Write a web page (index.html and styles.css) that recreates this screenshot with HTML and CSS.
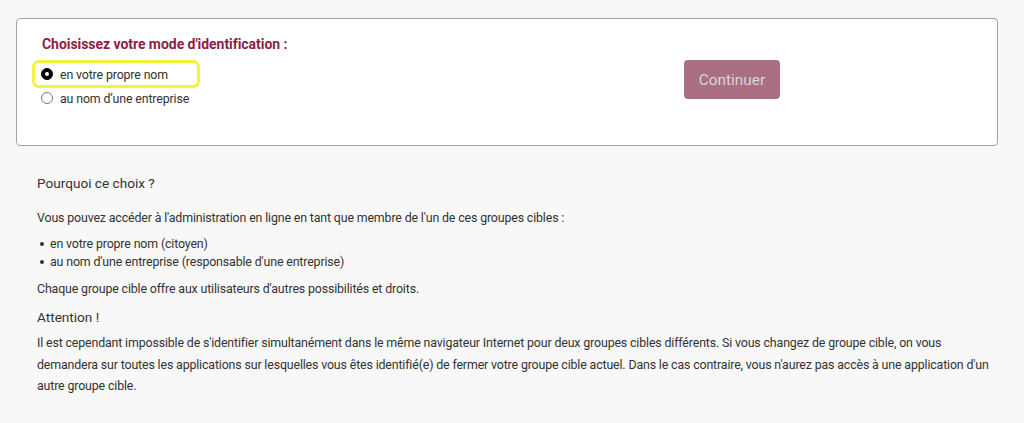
FILE: index.html
```html
<!DOCTYPE html>
<html lang="fr">
<head>
<meta charset="utf-8">
<title>Mode d'identification</title>
<link rel="stylesheet" href="styles.css">
</head>
<body>
<div class="page">
  <form class="card">
    <div class="choice">
      <h2 class="choice-title">Choisissez votre mode d'identification :</h2>
      <label class="option option-focus">
        <input type="radio" name="mode" class="radio" checked>
        <span>en votre propre nom</span>
      </label>
      <label class="option">
        <input type="radio" name="mode" class="radio">
        <span>au nom d’une entreprise</span>
      </label>
    </div>
    <div class="actions">
      <button type="button" class="btn" disabled>Continuer</button>
    </div>
  </form>

  <section class="info">
    <h3 class="info-title">Pourquoi ce choix ?</h3>
    <p class="text intro">Vous pouvez accéder à l'administration en ligne en tant que membre de l'un de ces groupes cibles :</p>
    <ul class="list">
      <li class="list-item">en votre propre nom (citoyen)</li>
      <li class="list-item">au nom d'une entreprise (responsable d'une entreprise)</li>
    </ul>
    <p class="text after-list">Chaque groupe cible offre aux utilisateurs d'autres possibilités et droits.</p>
    <h3 class="info-title attention">Attention !</h3>
    <p class="text warning">Il est cependant impossible de s'identifier simultanément dans le même navigateur Internet pour deux groupes cibles différents. Si vous changez de groupe cible, on vous demandera sur toutes les applications sur lesquelles vous êtes identifié(e) de fermer votre groupe cible actuel. Dans le cas contraire, vous n'aurez pas accès à une application d'un autre groupe cible.</p>
  </section>
</div>
</body>
</html>
```

FILE: styles.css
```css
* { box-sizing: border-box; }

html, body {
  margin: 0;
  padding: 0;
  background: #f8f8f8;
}

body {
  font-family: Roboto, "Liberation Sans", Arial, sans-serif;
  color: #333;
  width: 1024px;
  height: 423px;
  overflow: hidden;
}

.page {
  padding: 18px 26px 0 16px;
}

.card {
  display: flex;
  height: 128px;
  background: #fff;
  border: 1px solid #a3a3a3;
  border-radius: 4px;
  padding: 15px 0 0 25px;
  margin: 0;
}

.choice {
  width: 642px;
  display: flex;
  flex-direction: column;
  align-items: flex-start;
}

.choice-title {
  margin: 0 0 6px;
  font-size: 14px;
  line-height: 20px;
  font-weight: 700;
  color: #8c1f47;
  letter-spacing: -0.05px;
}

.option {
  display: flex;
  align-items: center;
  font-size: 12.4px;
  letter-spacing: -0.15px;
  color: #333;
  margin-left: -10px;
  padding-left: 9px;
  height: 20px;
}

.option-focus {
  height: 28px;
  border: 3px solid #f6f13c;
  border-radius: 7px;
  padding: 0 29px 0 6px;
}

.radio {
  appearance: none;
  -webkit-appearance: none;
  width: 12px;
  height: 12px;
  margin: 0 7px 0 0;
  border: 1px solid #7a7a7a;
  border-radius: 50%;
  background: #fff;
  display: grid;
  place-content: center;
}

.radio:checked {
  background: #000;
  border-color: #000;
}

.radio:checked::after {
  content: "";
  width: 4px;
  height: 4px;
  border-radius: 50%;
  background: #fff;
}

.actions {
  padding-top: 26px;
}

.btn {
  width: 96px;
  height: 39px;
  border: none;
  border-radius: 4px;
  background: #ab6f83;
  color: #d6d6d6;
  font-family: inherit;
  font-size: 15.4px;
  padding: 0;
}

.info {
  padding: 0 0 0 21px;
  width: 982px;
}

.info-title {
  margin: 27px 0 0;
  font-size: 13.6px;
  line-height: 20px;
  font-weight: 400;
  color: #333;
}

.info-title.attention {
  margin-top: 9px;
}

.text {
  margin: 0;
  font-size: 12.4px;
  letter-spacing: -0.15px;
  line-height: 18px;
}

.intro { margin-top: 16px; }

.list {
  list-style: none;
  margin: 8px 0 0;
  padding: 0 0 0 3px;
}

.list-item {
  display: flex;
  align-items: center;
  font-size: 12.4px;
  letter-spacing: -0.15px;
  line-height: 18px;
}

.list-item::before {
  content: "";
  width: 4px;
  height: 4px;
  border-radius: 50%;
  background: #333;
  margin-right: 6px;
}

.after-list { margin-top: 9px; }

.warning {
  margin-top: 5px;
  line-height: 21.5px;
}
```
